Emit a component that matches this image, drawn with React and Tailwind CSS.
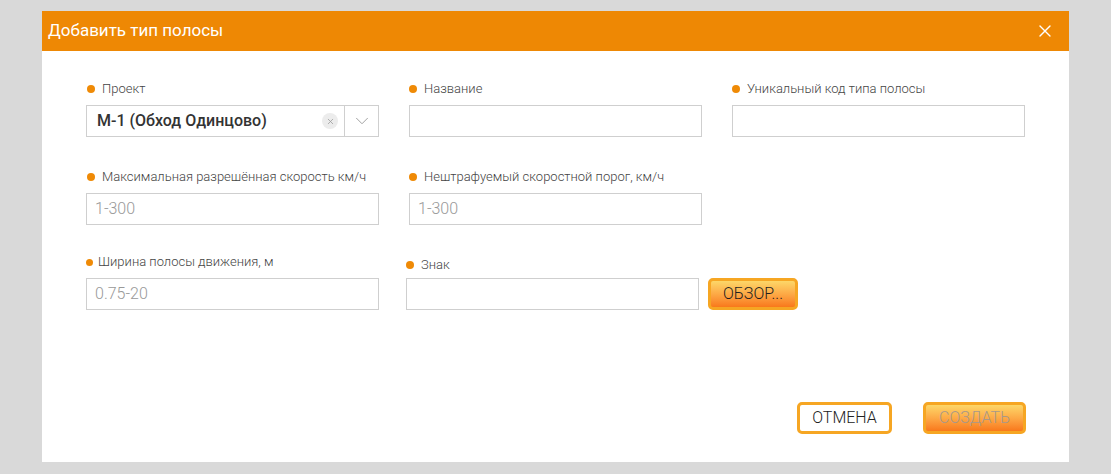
import { X, ChevronDown } from 'lucide-react';

function Label({ children, className = '' }) {
  return (
    <div className={`flex items-center h-4 mb-2 text-[13px] font-light text-[#444] ${className}`}>
      <span className="w-[8px] h-[8px] rounded-full bg-[#ef8a06] mr-[7px] shrink-0" />
      <span>{children}</span>
    </div>
  );
}

function Input({ placeholder = '', className = '' }) {
  return (
    <div className={`h-[32px] border border-[#cfcfcf] bg-white px-[8px] flex items-center text-[16px] font-light text-[#999] ${className}`}>
      {placeholder}
    </div>
  );
}

export default function App() {
  return (
    <div className="w-[1111px] h-[474px] bg-[#d9d9d9] pt-[11px] pl-[42px]" style={{ fontFamily: 'Roboto, "Liberation Sans", sans-serif' }}>
      <div className="w-[1027px] h-[451px] bg-white flex flex-col">
        <div className="h-[40px] bg-[#ee8804] flex items-center justify-between pl-[6px] pr-[14px]">
          <span className="text-white text-[17px] font-normal">Добавить тип полосы</span>
          <X className="w-[20px] h-[20px] text-white" strokeWidth={1.6} />
        </div>

        <div className="pl-[44px] pt-[30px] grid grid-cols-[293px_293px_293px] gap-x-[30px] gap-y-[32px]">
          <div>
            <Label className="pl-[1px]">Проект</Label>
            <div className="h-[32px] border border-[#cfcfcf] flex items-center">
              <span className="flex-1 pl-[10px] text-[16px] font-medium text-[#333]">М-1 (Обход Одинцово)</span>
              <span className="w-[16px] h-[16px] rounded-full bg-[#ececec] flex items-center justify-center mr-[6px]">
                <X className="w-[9px] h-[9px] text-[#999]" strokeWidth={2} />
              </span>
              <span className="w-[34px] h-full border-l border-[#cfcfcf] flex items-center justify-center">
                <ChevronDown className="w-[22px] h-[22px] text-[#999]" strokeWidth={1} />
              </span>
            </div>
          </div>
          <div>
            <Label>Название</Label>
            <Input />
          </div>
          <div>
            <Label>Уникальный код типа полосы</Label>
            <Input />
          </div>

          <div>
            <Label className="pl-[1px]">Максимальная разрешённая скорость км/ч</Label>
            <Input placeholder="1-300" />
          </div>
          <div>
            <Label>Нештрафуемый скоростной порог, км/ч</Label>
            <Input placeholder="1-300" />
          </div>
          <div />

          <div className="-mt-[3px]">
            <div className="flex items-center h-4 mb-2 text-[13px] font-light text-[#444]">
              <span className="w-[7px] h-[7px] rounded-full bg-[#ef8a06] mr-[5px] shrink-0" />
              <span>Ширина полосы движения, м</span>
            </div>
            <Input placeholder="0.75-20" />
          </div>
          <div className="col-span-2 -ml-[3px] -mt-[3px]">
            <div className="mt-[3px] mb-[5px]">
              <Label className="!mb-0">Знак</Label>
            </div>
            <div className="flex items-center">
              <Input className="w-[293px]" />
              <button className="ml-[9px] w-[90px] h-[32px] rounded-[5px] border-[3px] border-[#f6a623] bg-gradient-to-b from-[#fcd768] to-[#f8781a] text-[16px] font-light text-[#1f1f1f] flex items-center justify-center">
                ОБЗОР...
              </button>
            </div>
          </div>
        </div>

        <div className="flex-1" />
        <div className="flex justify-end pr-[43px] pb-[28px] gap-[31px]">
          <button className="w-[95px] h-[32px] rounded-[5px] border-[3px] border-[#f6a623] bg-white text-[16px] font-light text-[#222] flex items-center justify-center">
            ОТМЕНА
          </button>
          <button className="w-[103px] h-[32px] rounded-[5px] border-[3px] border-[#f6a623] bg-gradient-to-b from-[#fcd768] to-[#f8781a] text-[16px] font-light text-[#a8988a] flex items-center justify-center">
            СОЗДАТЬ
          </button>
        </div>
      </div>
    </div>
  );
}
